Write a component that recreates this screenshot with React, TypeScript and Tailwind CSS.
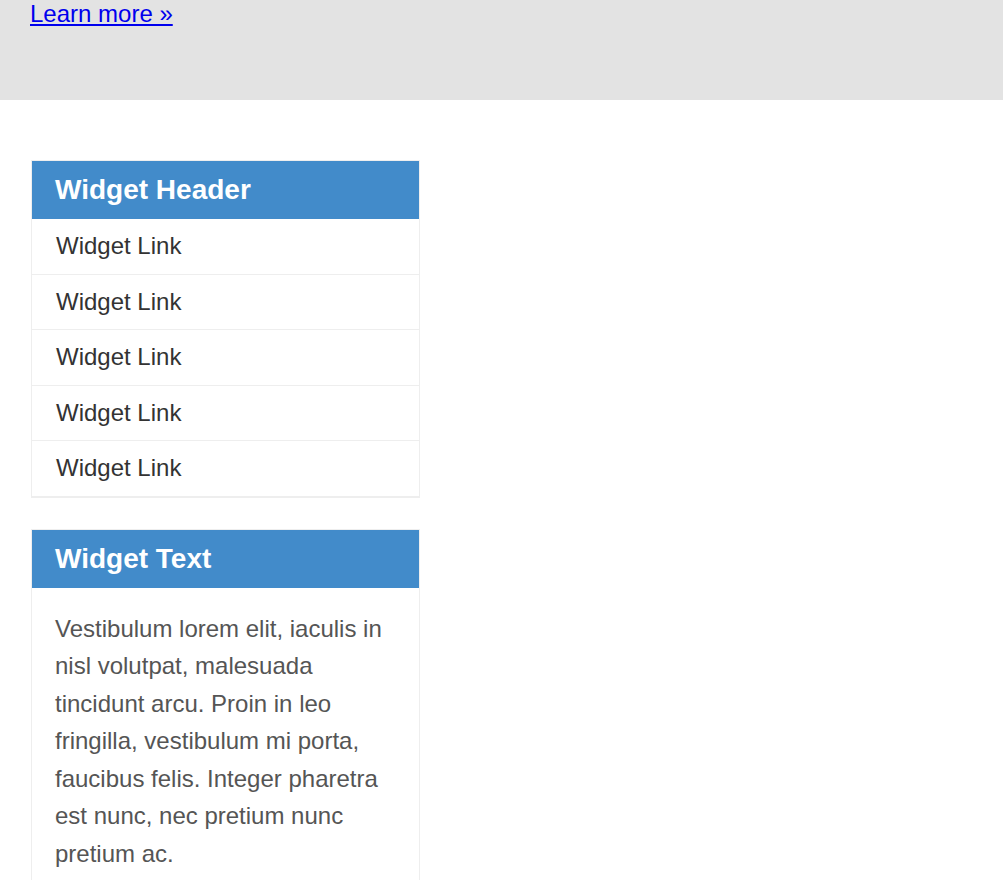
import React from 'react';

const links = ['Widget Link', 'Widget Link', 'Widget Link', 'Widget Link', 'Widget Link'];

const App: React.FC = () => {
  return (
    <div className="min-h-[880px] bg-white font-['Liberation_Sans',Arial,sans-serif]">
      <div className="h-[100px] bg-[#e3e3e3] px-[30px]">
        <a href="#" className="text-[24px] leading-[normal] text-[#0000ee] underline">
          Learn more »
        </a>
      </div>

      <div className="pt-[60px] pl-[31px]">
        <div className="w-[389px] border border-[#eeeeee]">
          <h3 className="flex h-[58px] items-center bg-[#428bca] pl-[23px] text-[28px] font-bold text-white">
            Widget Header
          </h3>
          <ul>
            {links.map((l, i) => (
              <li key={i} className="border-b border-[#eeeeee] py-[10px] pl-6 text-[24px] leading-[34.5px] text-[#333333]">
                <a href="#">{l}</a>
              </li>
            ))}
          </ul>
        </div>

        <div className="mt-[31px] w-[389px] border border-[#eeeeee]">
          <h3 className="flex h-[58px] items-center bg-[#428bca] pl-[23px] text-[28px] font-bold text-white">
            Widget Text
          </h3>
          <p className="px-[23px] pt-[22px] pb-6 text-[24px] leading-[37.5px] text-[#555555]">
            Vestibulum lorem elit, iaculis in nisl volutpat, malesuada tincidunt arcu. Proin in leo fringilla,
            vestibulum mi porta, faucibus felis. Integer pharetra est nunc, nec pretium nunc pretium ac.
          </p>
        </div>
      </div>
    </div>
  );
};

export default App;
